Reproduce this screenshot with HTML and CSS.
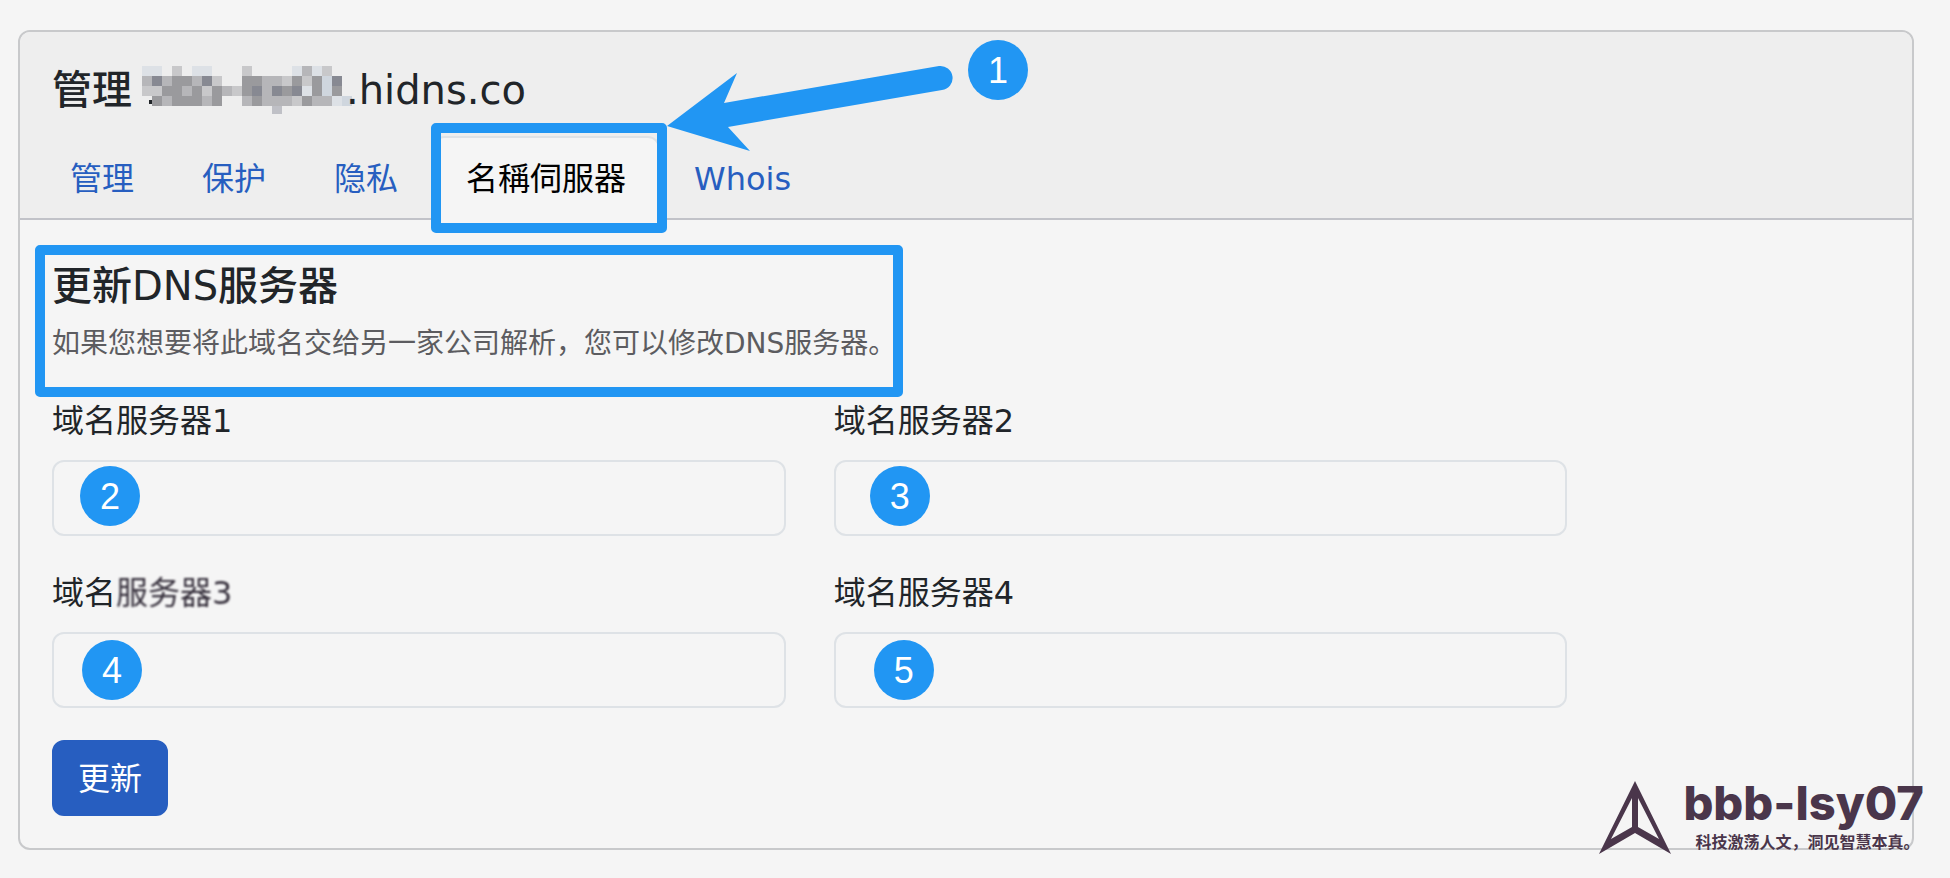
FILE: index.html
```html
<!DOCTYPE html>
<html lang="zh-CN">

<head>
    <meta charset="UTF-8">
    <meta name="viewport" content="width=device-width, initial-scale=1.0">
    <title>更新DNS服务器</title>
    <link rel="stylesheet" href="styles.css">
</head>

<body>

    <main class="card">
        <header class="card-header">
            <h1 class="title">
                <span>管理</span>
                <svg class="mosaic" id="mosaic" viewBox="0 0 210 48" aria-hidden="true"></svg>
                <span>.hidns.co</span>
            </h1>
            <nav>
                <ul class="tabs">
                    <li><a class="tab" href="#manage">管理</a></li>
                    <li><a class="tab" href="#protect">保护</a></li>
                    <li><a class="tab" href="#privacy">隐私</a></li>
                    <li class="current">
                        <a class="tab active" href="#nameservers">名稱伺服器</a>
                        <span class="frame frame-tab"></span>
                        <svg class="arrow" viewBox="0 0 290 90" aria-hidden="true">
                            <path d="M0 56 L70 3 L57 33 L272 -4 A12 12 0 0 1 275 20 L61 57 L83 81 Z" />
                        </svg>
                        <span class="badge badge-1">1</span>
                    </li>
                    <li><a class="tab" href="#whois">Whois</a></li>
                </ul>
            </nav>
        </header>

        <div class="card-body">
            <div class="intro">
                <h2 class="title">更新DNS服务器</h2>
                <p>如果您想要将此域名交给另一家公司解析，您可以修改DNS服务器。</p>
                <span class="frame frame-intro"></span>
            </div>

            <form>
                <div class="fields">
                    <div class="field">
                        <label for="ns1">域名服务器1</label>
                        <div class="control">
                            <input type="text" id="ns1">
                            <span class="badge badge-2">2</span>
                        </div>
                    </div>
                    <div class="field">
                        <label for="ns2">域名服务器2</label>
                        <div class="control">
                            <input type="text" id="ns2">
                            <span class="badge badge-3">3</span>
                        </div>
                    </div>
                    <div class="field field-left">
                        <label for="ns3">域名<span class="smudge">服务器3</span></label>
                        <div class="control">
                            <input type="text" id="ns3">
                            <span class="badge badge-4">4</span>
                        </div>
                    </div>
                    <div class="field">
                        <label for="ns4">域名服务器4</label>
                        <div class="control">
                            <input type="text" id="ns4">
                            <span class="badge badge-5">5</span>
                        </div>
                    </div>
                </div>
                <button type="button" class="btn">更新</button>
            </form>
        </div>

        <div class="watermark">
            <svg viewBox="0 0 72 74" aria-hidden="true">
                <path fill-rule="evenodd" d="M36 0 L72 73 L36 52 L0 73 Z M33 17 L12 58 L33 46 Z M39 17 L60 58 L39 46 Z" />
            </svg>
            <div class="watermark-text">
                <strong>bbb-lsy07</strong>
                <span>科技激荡人文，洞见智慧本真。</span>
            </div>
        </div>
    </main>

    <script>
        // one letter per 10px cell, "." is empty
        const shades = {
            a: "#dde1e6", b: "#c8c8ca", c: "#b6b6b9", d: "#9a9a9d", e: "#878992", f: "#cfd6de"
        }
        const rows = [
            "aa.b.aa...b....acab..",
            "cecddceb..ddccbdbdfe.",
            "bbddcdbdcbdecedeadfd.",
            ".dcdddcd..cdcccbdccaf"
        ]
        const svg = document.getElementById("mosaic")

        function addCell(x, y, w, h, fill) {
            const rect = document.createElementNS("http://www.w3.org/2000/svg", "rect")
            rect.setAttribute("x", x)
            rect.setAttribute("y", y)
            rect.setAttribute("width", w)
            rect.setAttribute("height", h)
            rect.setAttribute("fill", fill)
            svg.appendChild(rect)
        }

        rows.forEach(function (row, r) {
            row.split("").forEach(function (key, c) {
                if (shades[key]) {
                    addCell(c * 10, r * 10, 10, 10, shades[key])
                }
            })
        })
        addCell(130, 40, 10, 8, "#bfc0c6")
        addCell(7, 34, 3, 4, "#212529")
    </script>

</body>

</html>
```
FILE: styles.css
```css
* {
    box-sizing: border-box;
}

body {
    margin: 0;
    padding: 30px 36px 28px 18px;
    background-color: #f5f5f5;
    color: #212529;
    font-family: "DejaVu Sans", "Noto Sans CJK SC", sans-serif;
    font-size: 32px;
    line-height: 48px;
}

.card {
    position: relative;
    border: 2px solid #c8c9cb;
    border-radius: 12px;
}

.card-header {
    padding: 34px 16px 0;
    background-color: #eee;
    border-bottom: 2px solid #c1c2c8;
    border-radius: 10px 10px 0 0;
}

.title {
    margin: 0;
    font-size: 40px;
    font-weight: 500;
    line-height: 48px;
}

.card-header .title {
    display: flex;
    align-items: center;
    padding: 0 16px;
    margin-bottom: 22px;
}

.mosaic {
    width: 210px;
    height: 48px;
    margin: 0 -6px 0 10px;
}

/* tabs */
.tabs {
    display: flex;
    list-style: none;
    margin: 0 0 -2px;
    padding: 0;
}

.tab {
    display: block;
    padding: 17px 32px 15px;
    border: 2px solid transparent;
    border-radius: 12px 12px 0 0;
    color: #275ec0;
    text-decoration: none;
}

.tab.active {
    background-color: #f5f5f5;
    border-color: #dee2e6 #dee2e6 #f5f5f5;
    color: #000;
}

.current {
    position: relative;
}

/* body */
.card-body {
    padding: 42px 32px 32px;
}

.intro {
    position: relative;
    width: fit-content;
    margin-bottom: 31px;
}

.intro p {
    margin: 12px 0 0;
    color: #5c5c60;
    font-size: 28px;
    line-height: 44px;
}

.fields {
    display: grid;
    grid-template-columns: repeat(12, 1fr);
    gap: 33px 48px;
    margin-bottom: 32px;
}

.field {
    grid-column: span 5;
}

.field-left {
    grid-column: 1 / span 5;
}

label {
    display: block;
    margin-bottom: 15px;
}

.smudge {
    color: #352f3b;
    filter: blur(1px);
}

.control {
    position: relative;
}

input {
    display: block;
    width: 100%;
    height: 76px;
    padding: 12px 24px;
    border: 2px solid #dee2e6;
    border-radius: 12px;
    background-color: transparent;
    color: inherit;
    font: inherit;
}

.btn {
    display: block;
    padding: 13px 24px 11px;
    border: 2px solid #275ec0;
    border-radius: 12px;
    background-color: #275ec0;
    color: #fff;
    font: inherit;
    cursor: pointer;
}

/* callouts laid over the form */
.frame {
    position: absolute;
    border: 10px solid #2196f3;
    border-radius: 5px;
    pointer-events: none;
}

.frame-tab {
    inset: -13px -7px -13px -1px;
}

.frame-intro {
    inset: -17px -7px -31px -17px;
}

.arrow {
    position: absolute;
    left: 235px;
    top: -66px;
    width: 290px;
    height: 90px;
    overflow: visible;
    fill: #2196f3;
    pointer-events: none;
}

.badge {
    position: absolute;
    top: 6px;
    width: 60px;
    height: 60px;
    border-radius: 50%;
    background-color: #2196f3;
    color: #fff;
    font-family: "Liberation Sans", sans-serif;
    font-size: 36px;
    line-height: 62px;
    text-align: center;
}

.badge-1 {
    left: 536px;
    top: -96px;
}

.badge-2 {
    left: 28px;
}

.badge-3 {
    left: 36px;
}

.badge-4 {
    left: 30px;
    top: 8px;
}

.badge-5 {
    left: 40px;
    top: 8px;
}

.watermark {
    position: absolute;
    right: -12px;
    bottom: -9px;
    display: flex;
    gap: 12px;
    color: #4a364b;
}

.watermark svg {
    width: 72px;
    height: 74px;
    fill: currentColor;
}

.watermark-text strong {
    display: block;
    font-family: Inter, sans-serif;
    font-size: 47px;
    font-weight: 800;
    line-height: 44px;
}

.watermark-text span {
    display: block;
    padding-left: 12px;
    font-family: "Noto Sans CJK SC", sans-serif;
    font-size: 16px;
    font-weight: 700;
    line-height: 32px;
}
```
